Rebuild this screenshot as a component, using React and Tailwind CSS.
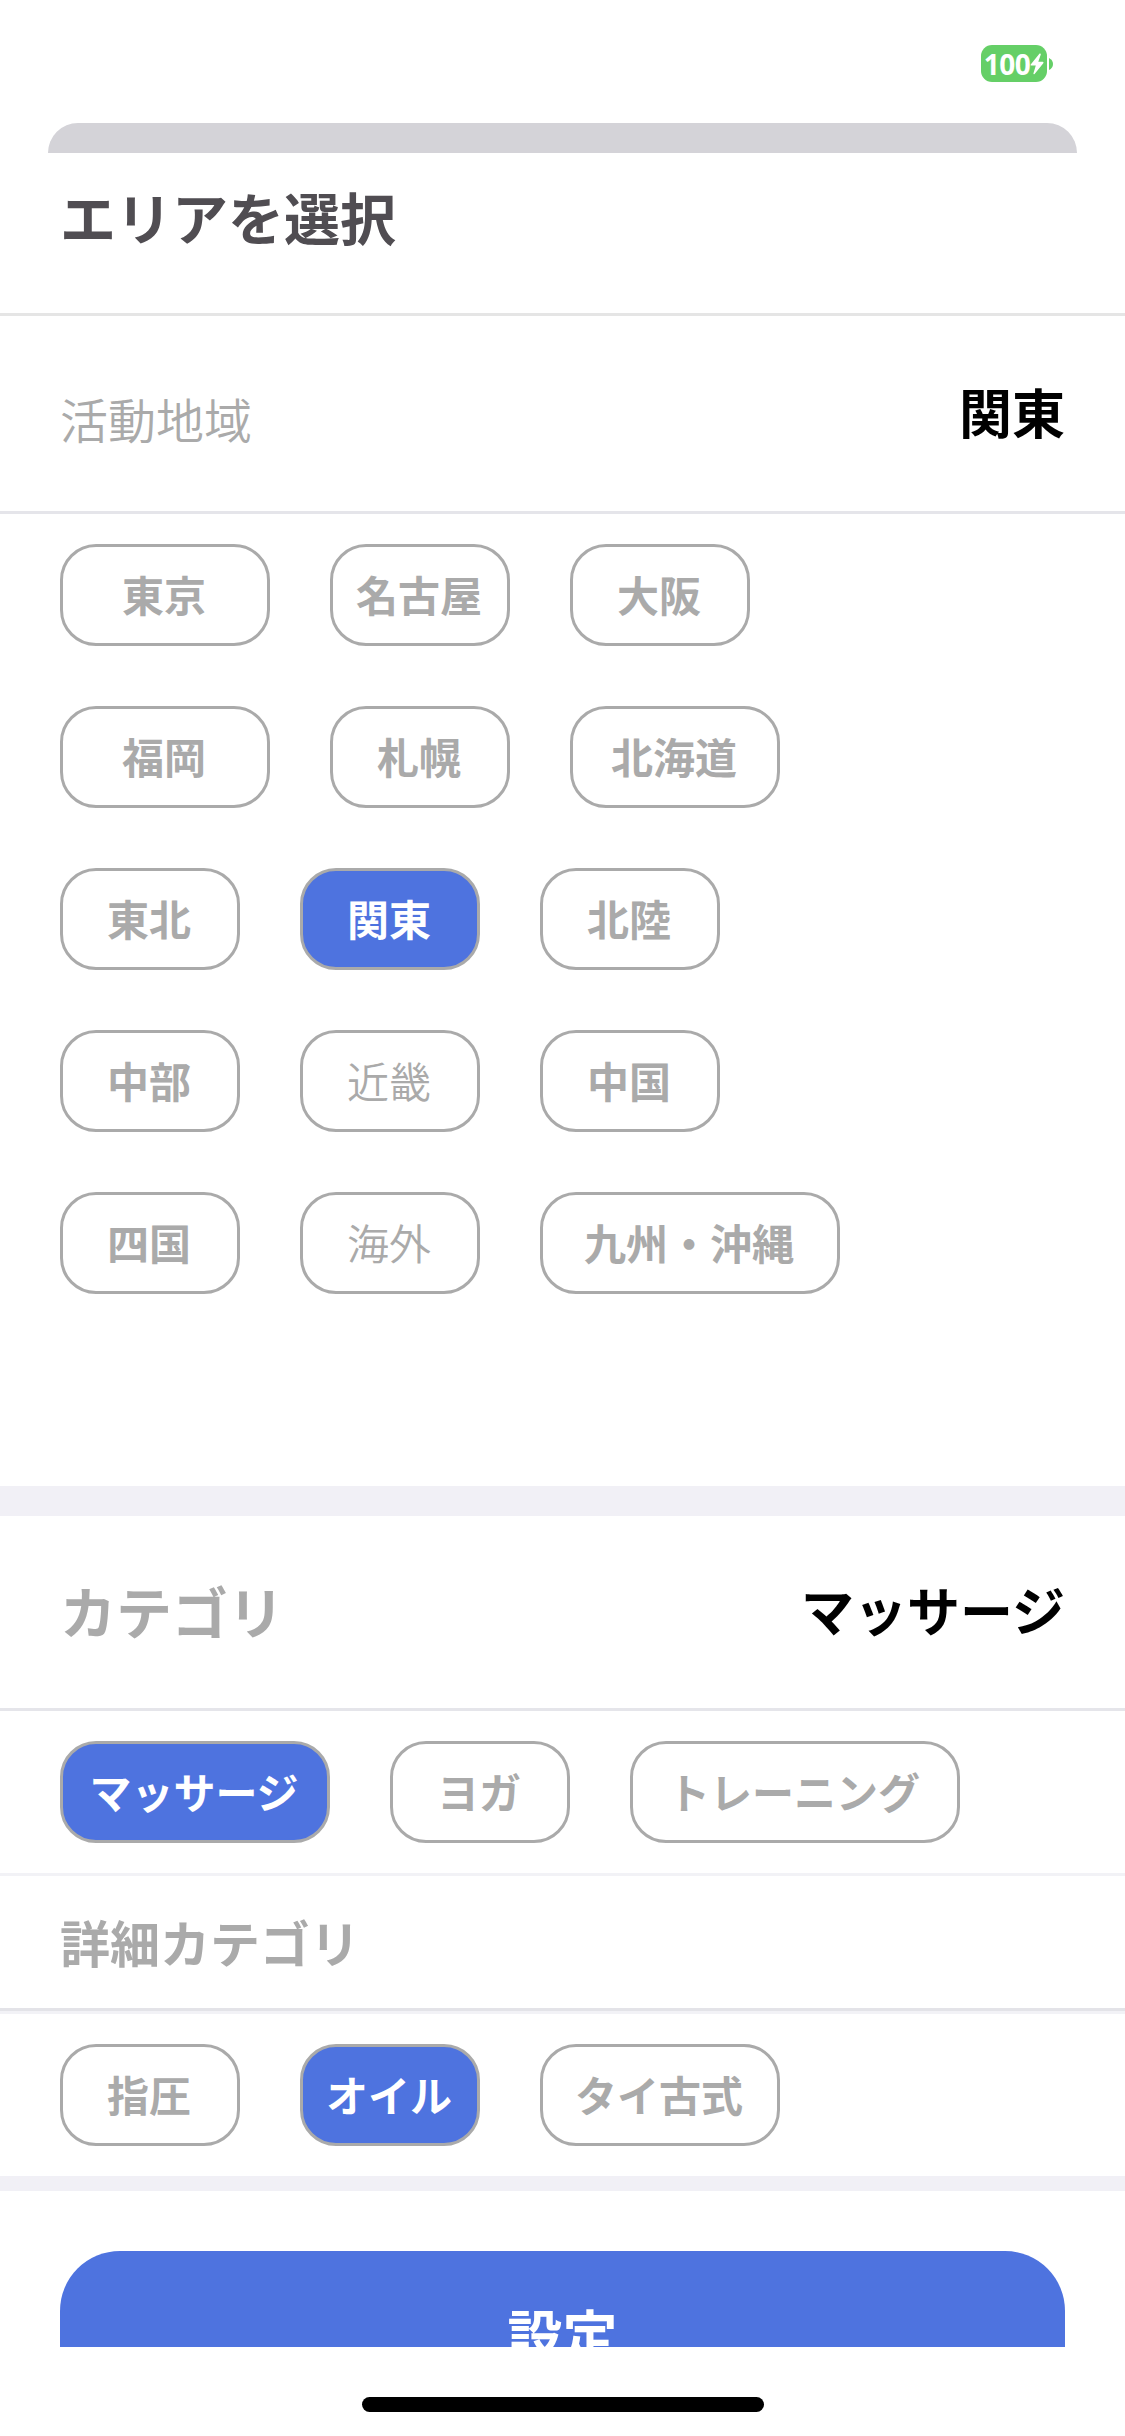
import { useState } from 'react';
import clsx from 'clsx';

const AREA_ROWS = [
  [
    { name: '東京', width: 'w-[210px]' },
    { name: '名古屋', width: 'w-[180px]' },
    { name: '大阪', width: 'w-[180px]' },
  ],
  [
    { name: '福岡', width: 'w-[210px]' },
    { name: '札幌', width: 'w-[180px]' },
    { name: '北海道', width: 'w-[210px]' },
  ],
  [
    { name: '東北', width: 'w-[180px]' },
    { name: '関東', width: 'w-[180px]' },
    { name: '北陸', width: 'w-[180px]' },
  ],
  [
    { name: '中部', width: 'w-[180px]' },
    { name: '近畿', width: 'w-[180px]', light: true },
    { name: '中国', width: 'w-[180px]' },
  ],
  [
    { name: '四国', width: 'w-[180px]' },
    { name: '海外', width: 'w-[180px]', light: true },
    { name: '九州・沖縄', width: 'w-[300px]' },
  ],
];

const CATEGORIES = [
  { name: 'マッサージ', width: 'w-[270px]' },
  { name: 'ヨガ', width: 'w-[180px]' },
  { name: 'トレーニング', width: 'w-[330px]' },
];

const DETAILS = [
  { name: '指圧', width: 'w-[180px]' },
  { name: 'オイル', width: 'w-[180px]' },
  { name: 'タイ古式', width: 'w-[240px]' },
];

function Battery() {
  return (
    <div className="flex items-center gap-[2px]">
      <div className="flex h-[37px] w-[66px] items-center justify-center rounded-[11px] bg-[#65cf67] text-white">
        <span className="font-['Open_Sans'] text-[28px] leading-none font-bold tracking-[-0.5px]">100</span>
        <svg width="14" height="22" viewBox="0 0 14 22" fill="currentColor">
          <path d="M9.6 0.6 0.7 11.4Q0 12.5 1.2 12.6H5.8L3.4 20.6Q3.5 21.8 4.6 21L13.3 10.2Q14 9 12.8 8.8H8.3L10.8 1.4Q10.7 0 9.6 0.6Z" />
        </svg>
      </div>
      <svg width="4" height="12" viewBox="0 0 4 12" fill="#65cf67">
        <path d="M0 0Q4 2 4 6T0 12Z" />
      </svg>
    </div>
  );
}

function Chip({ item, selected, onSelect }) {
  return (
    <button
      type="button"
      onClick={() => onSelect(item.name)}
      className={clsx(
        'flex h-[102px] shrink-0 items-center justify-center rounded-[36px] border-[3px] border-[#aaaaaa] pr-[2px] pb-[3px] text-[42px] leading-none whitespace-nowrap',
        item.width,
        item.light ? 'font-[350]' : 'font-bold',
        selected ? 'bg-[#4e73df] text-white' : 'bg-white text-[#aaaaaa]'
      )}
    >
      {item.name}
    </button>
  );
}

function ChipRow({ items, value, onSelect }) {
  return (
    <div className="flex gap-[60px]">
      {items.map((item) => (
        <Chip key={item.name} item={item} selected={item.name === value} onSelect={onSelect} />
      ))}
    </div>
  );
}

export default function App() {
  const [area, setArea] = useState('関東');
  const [category, setCategory] = useState('マッサージ');
  const [detail, setDetail] = useState('オイル');

  return (
    <div className="flex h-[2436px] w-[1125px] flex-col overflow-hidden bg-white font-['Noto_Sans_CJK_JP',sans-serif]">
      <div className="flex h-[123px] shrink-0 items-start justify-end pt-[45px] pr-[72px]">
        <Battery />
      </div>
      <div className="mx-12 h-[30px] shrink-0 rounded-t-[30px] bg-[#d4d3d8]" />

      <header className="flex h-[163px] shrink-0 items-start border-b-[3px] border-[#e5e5e5] px-[60px] pt-[33px]">
        <h1 className="text-[56px] leading-[60px] font-bold text-[#504d52]">エリアを選択</h1>
      </header>

      <div className="flex h-[198px] shrink-0 justify-between border-b-[3px] border-[#e5e5ea] px-[60px]">
        <span className="pt-[72px] text-[48px] leading-[60px] font-[350] text-[#aaaaaa]">活動地域</span>
        <span className="pt-[65px] text-[53px] leading-[60px] font-bold text-black">{area}</span>
      </div>

      <div className="flex h-[972px] shrink-0 flex-col gap-[60px] px-[60px] pt-[30px]">
        {AREA_ROWS.map((row) => (
          <ChipRow key={row[0].name} items={row} value={area} onSelect={setArea} />
        ))}
      </div>

      <div className="h-[30px] shrink-0 bg-[#f1f0f6]" />

      <div className="flex h-[195px] shrink-0 justify-between border-b-[3px] border-[#e5e5ea] px-[60px]">
        <span className="pt-[64px] text-[56px] leading-[60px] font-bold text-[#aaaaaa]">カテゴリ</span>
        <span className="pt-[63px] text-[53px] leading-[60px] font-bold text-black">{category}</span>
      </div>
      <div className="h-[165px] shrink-0 border-b-[3px] border-[#f2f2f6] px-[60px] pt-[30px]">
        <ChipRow items={CATEGORIES} value={category} onSelect={setCategory} />
      </div>

      <div className="h-[135px] shrink-0 border-b-[3px] border-[#e3e3e8] px-[60px] pt-[35px]">
        <span className="block text-[50px] leading-[60px] font-bold text-[#aaaaaa]">詳細カテゴリ</span>
      </div>
      <div className="h-[165px] shrink-0 border-t-[3px] border-[#f2f2f6] px-[60px] pt-[30px]">
        <ChipRow items={DETAILS} value={detail} onSelect={setDetail} />
      </div>

      <div className="h-[15px] shrink-0 bg-[#f1f0f6]" />

      <div className="h-[156px] shrink-0 overflow-hidden px-[60px] pt-[60px]">
        <button
          type="button"
          className="flex h-[162px] w-full items-center justify-center rounded-[60px] bg-[#4e73df] text-[55px] leading-none font-bold text-white"
        >
          設定
        </button>
      </div>
      <div className="flex h-[89px] shrink-0 justify-center pt-[50px]">
        <div className="h-[15px] w-[402px] rounded-full bg-black" />
      </div>
    </div>
  );
}
